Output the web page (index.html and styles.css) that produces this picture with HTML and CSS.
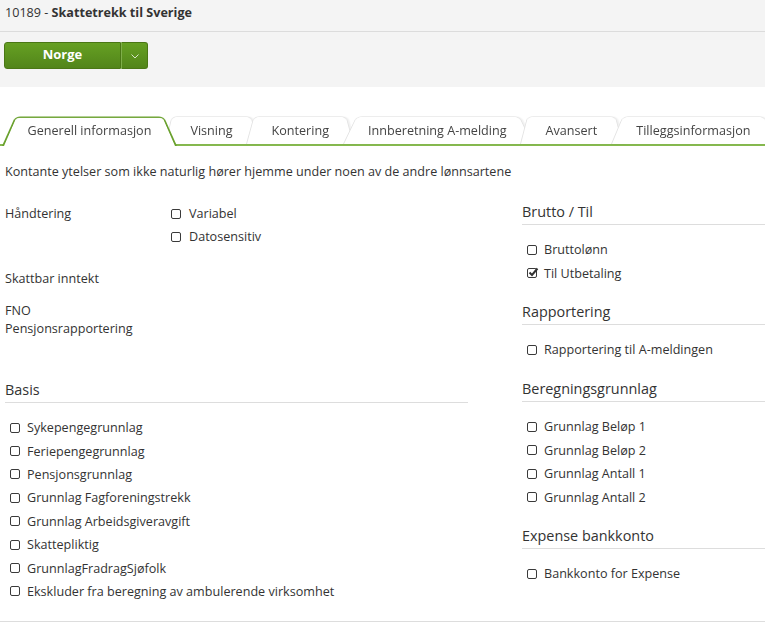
FILE: index.html
```html
<!DOCTYPE html>
<html lang="no">
<head>
    <meta charset="UTF-8">
    <title>Lønnsart 10189</title>
    <link rel="stylesheet" href="styles.css">
</head>
<body>
    <div class="titlebar">10189 - <strong>Skattetrekk til Sverige</strong></div>
    <div class="toolbar">
        <div class="split-btn">
            <button class="btn-main">Norge</button>
            <button class="btn-caret">
                <svg width="8" height="5" viewBox="0 0 8 5"><path d="M0.5 0.5 L4 4 L7.5 0.5" fill="none" stroke="#d7e4c6" stroke-width="1"/></svg>
            </button>
        </div>
    </div>

    <ul class="tabs">
        <li class="tab active">Generell informasjon</li>
        <li class="tab">Visning</li>
        <li class="tab">Kontering</li>
        <li class="tab">Innberetning A-melding</li>
        <li class="tab">Avansert</li>
        <li class="tab">Tilleggsinformasjon</li>
    </ul>

    <p class="intro">Kontante ytelser som ikke naturlig hører hjemme under noen av de andre lønnsartene</p>

    <div class="form">
        <div class="col-left">
            <div class="field">
                <div class="label">Håndtering</div>
                <div class="opts">
                    <label class="check"><span class="box"></span>Variabel</label>
                    <label class="check"><span class="box"></span>Datosensitiv</label>
                </div>
            </div>
            <div class="field-text taxable">Skattbar inntekt</div>
            <div class="field-text stacked">FNO<br>Pensjonsrapportering</div>

            <div class="section basis">
                <h3>Basis</h3>
                <div class="checks">
                    <label class="check"><span class="box"></span>Sykepengegrunnlag</label>
                    <label class="check"><span class="box"></span>Feriepengegrunnlag</label>
                    <label class="check"><span class="box"></span>Pensjonsgrunnlag</label>
                    <label class="check"><span class="box"></span>Grunnlag Fagforeningstrekk</label>
                    <label class="check"><span class="box"></span>Grunnlag Arbeidsgiveravgift</label>
                    <label class="check"><span class="box"></span>Skattepliktig</label>
                    <label class="check"><span class="box"></span>GrunnlagFradragSjøfolk</label>
                    <label class="check"><span class="box"></span>Ekskluder fra beregning av ambulerende virksomhet</label>
                </div>
            </div>
        </div>

        <div class="col-right">
            <div class="section">
                <h3>Brutto / Til</h3>
                <div class="checks">
                    <label class="check"><span class="box"></span>Bruttolønn</label>
                    <label class="check"><span class="box checked"><svg width="12" height="12" viewBox="0 0 12 12"><path d="M2.5 5.5 L5 8 L10.5 1.5" fill="none" stroke="#333" stroke-width="2"/></svg></span>Til Utbetaling</label>
                </div>
            </div>
            <div class="section">
                <h3>Rapportering</h3>
                <div class="checks">
                    <label class="check"><span class="box"></span>Rapportering til A-meldingen</label>
                </div>
            </div>
            <div class="section">
                <h3>Beregningsgrunnlag</h3>
                <div class="checks">
                    <label class="check"><span class="box"></span>Grunnlag Beløp 1</label>
                    <label class="check"><span class="box"></span>Grunnlag Beløp 2</label>
                    <label class="check"><span class="box"></span>Grunnlag Antall 1</label>
                    <label class="check"><span class="box"></span>Grunnlag Antall 2</label>
                </div>
            </div>
            <div class="section">
                <h3>Expense bankkonto</h3>
                <div class="checks">
                    <label class="check"><span class="box"></span>Bankkonto for Expense</label>
                </div>
            </div>
        </div>
    </div>
    <div class="bottom-rule"></div>
</body>
</html>
```

FILE: styles.css
```css
body, p, ul, li, h3{
    margin: 0;
    padding: 0;
}
body{
    font-family: "Open Sans", "Liberation Sans", sans-serif;
    font-size: 12.6px;
    color: #333;
    background: #fff;
    overflow: hidden;
}
.titlebar{
    height: 31px;
    line-height: 26px;
    padding-left: 5px;
    background: #f4f4f4;
    border-bottom: 1px solid #dcdcdc;
}
.titlebar strong{
    font-weight: 700;
}
.toolbar{
    background: #f4f4f4;
    padding: 10px 4px 18px;
}
.split-btn{
    display: flex;
    height: 27px;
}
.split-btn button{
    border: 1px solid #4a7715;
    background: linear-gradient(to bottom, #66a023, #52851a);
    color: #fff;
    font-family: inherit;
    cursor: pointer;
    padding: 0;
}
.btn-main{
    width: 117px;
    font-size: 13px;
    font-weight: 700;
    line-height: 23px;
    padding-bottom: 2px !important;
    border-radius: 3px 0 0 3px;
    border-right-color: #3f6811;
}
.btn-caret{
    width: 27px;
    border-left: 1px solid #7fae4a !important;
    border-radius: 0 3px 3px 0;
    display: flex;
    align-items: center;
    justify-content: center;
}
.btn-caret svg{
    margin-top: 2px;
}

/* tabs */
.tabs{
    list-style: none;
    display: flex;
    margin-top: 31px;
    padding-left: 8px;
    height: 26px;
    border-bottom: 2px solid #86b94f;
}
.tab{
    position: relative;
    z-index: 1;
    padding: 0 19.5px;
    line-height: 26px;
    color: #444;
    white-space: nowrap;
}
.tab::before{
    content: '';
    position: absolute;
    left: -6px;
    right: -6px;
    bottom: 0;
    height: 35px;
    z-index: -1;
    background: #fff;
    border: 1px solid #e4e4e4;
    border-bottom: none;
    border-radius: 6px 6px 0 0;
    box-shadow: 2px 0 2px rgba(0, 0, 0, 0.06);
    transform: perspective(100px) rotateX(27deg);
    transform-origin: bottom;
}
.tab.active{
    z-index: 5;
}
.tab.active::before{
    bottom: -2px;
    height: 37px;
    border: 2px solid #6aa12e;
    border-bottom: none;
    box-shadow: none;
}

.intro{
    margin-top: 17px;
    padding-left: 5px;
    line-height: 18px;
}

/* form */
.form{
    display: grid;
    grid-template-columns: 463px 1fr;
    column-gap: 54px;
    padding-left: 5px;
    margin-top: 21px;
}
.field{
    display: grid;
    grid-template-columns: 166px 1fr;
    line-height: 23px;
}
.opts .check{
    height: 23px;
}
.opts .box{
    margin-right: 8px;
}
.field-text.taxable{
    margin-top: 19px;
    line-height: 23px;
}
.field-text.stacked{
    margin-top: 12px;
    line-height: 18px;
}
.section h3{
    font-size: 14.4px;
    font-weight: 400;
    line-height: 20px;
    padding-bottom: 2px;
    border-bottom: 1px solid #dddddd;
    color: #333;
}
.section.basis{
    margin-top: 42px;
}
.col-right .section + .section{
    margin-top: 17.5px;
}
.checks{
    margin-top: 13px;
    padding-left: 5px;
}
.check{
    display: flex;
    align-items: center;
    height: 23.4px;
    white-space: nowrap;
}
.box{
    position: relative;
    display: inline-block;
    width: 8px;
    height: 8px;
    border: 1px solid #3a3a3a;
    border-radius: 2px;
    margin-right: 7px;
    flex-shrink: 0;
}
.box.checked svg{
    position: absolute;
    left: -1px;
    top: -2px;
}
.bottom-rule{
    margin-top: 18px;
    border-top: 1px solid #dddddd;
}
```
